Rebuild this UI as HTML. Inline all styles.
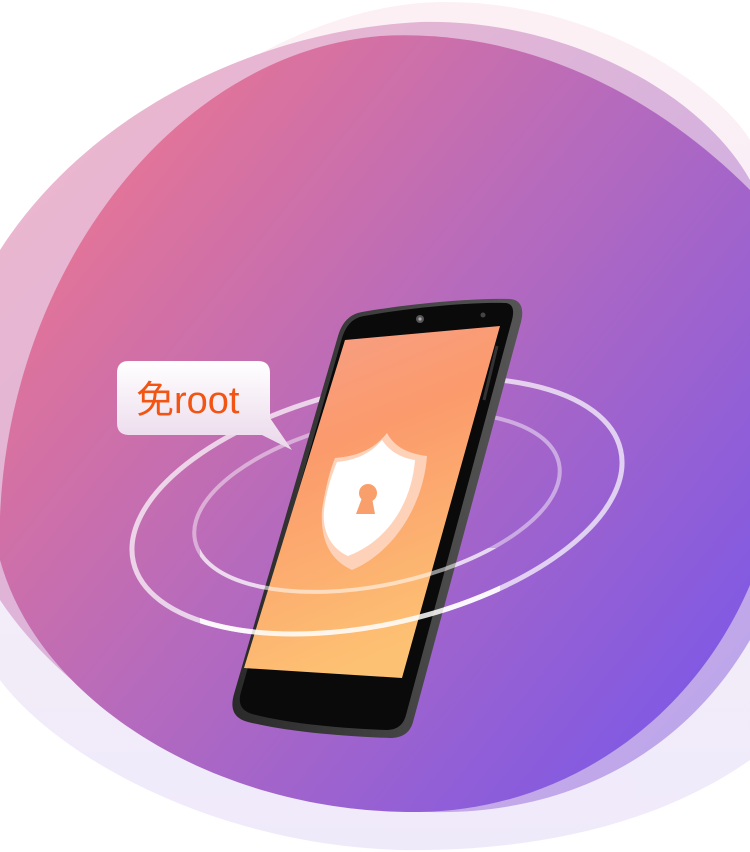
<!DOCTYPE html>
<html><head><meta charset="utf-8"><style>
html,body{margin:0;padding:0;background:#fff;width:750px;height:852px;overflow:hidden}
svg{display:block}
</style></head><body>
<svg width="750" height="852" viewBox="0 0 750 852" xmlns="http://www.w3.org/2000/svg">
<defs>
<linearGradient id="pale" x1="0" y1="0" x2="0" y2="1">
<stop offset="0" stop-color="#fcf0f4"/><stop offset="0.5" stop-color="#f6eef8"/><stop offset="1" stop-color="#efeafa"/>
</linearGradient>
<linearGradient id="mid" x1="0" y1="0" x2="1" y2="1">
<stop offset="0" stop-color="#f0b8cb"/><stop offset="0.5" stop-color="#d9b3dc"/><stop offset="1" stop-color="#b7a3ef"/>
</linearGradient>
<linearGradient id="main" x1="0.05" y1="0.15" x2="0.95" y2="0.9">
<stop offset="0" stop-color="#ec7690"/><stop offset="0.45" stop-color="#b86bbb"/><stop offset="1" stop-color="#7c58e6"/>
</linearGradient>
<linearGradient id="scr" x1="0" y1="0" x2="0.3" y2="1">
<stop offset="0" stop-color="#f6a08a"/><stop offset="0.4" stop-color="#fb9a6c"/><stop offset="1" stop-color="#fdc173"/>
</linearGradient>
<linearGradient id="bub" x1="0" y1="0" x2="0" y2="1">
<stop offset="0" stop-color="#ffffff"/><stop offset="1" stop-color="#ead7ea"/>
</linearGradient>
<linearGradient id="body" x1="0" y1="0" x2="1" y2="0">
<stop offset="0" stop-color="#2a2a2a"/><stop offset="1" stop-color="#555"/>
</linearGradient>
<clipPath id="front"><rect x="200" y="548" width="300" height="120"/></clipPath>
</defs>
<path d="M0 300 C120 120 290 5 440 2 C600 0 720 90 750 140 L750 760 C650 830 520 852 400 850 C220 845 60 760 0 680 Z" fill="url(#pale)"/>
<path d="M0 250 C90 110 260 30 420 22 C560 18 700 90 750 180 L750 640 C680 760 560 815 430 812 C250 808 80 720 0 600 Z" fill="url(#mid)"/>
<path d="M0 560 C-10 300 160 55 380 36 C520 28 650 90 750 190 L750 585 C690 725 560 810 420 812 C220 814 40 705 0 560 Z" fill="url(#main)"/>
<g id="rings" fill="none" stroke="#fff">
<ellipse cx="377" cy="506" rx="250" ry="118" transform="rotate(-13 377 506)" stroke-width="5" stroke-opacity="0.7"/>
<ellipse cx="377" cy="502" rx="186" ry="83" transform="rotate(-12 377 502)" stroke-width="4" stroke-opacity="0.45"/>
</g>
<!-- phone -->
<path d="M362 312 C420 302 480 298 510 299 C522 300 524 310 521 322 L413 722 C410 733 402 738 390 738 C330 736 280 730 248 722 C233 718 230 708 234 694 L338 336 C342 322 350 314 362 312 Z" fill="url(#body)"/>
<path d="M364 316 C420 306 478 302 506 303 C514 304 514 312 512 320 L406 715 C403 726 396 730 386 730 C330 728 282 722 252 714 C240 710 238 702 241 692 L342 338 C346 326 352 318 364 316 Z" fill="#0a0a0a"/>
<circle cx="420" cy="319" r="4" fill="#555"/><circle cx="420" cy="319" r="1.6" fill="#aaa"/>
<circle cx="483" cy="315" r="2.5" fill="#444"/>
<polygon points="345,340 500,326 402,678 244,668" fill="url(#scr)"/>
<path d="M497 346 L484 400" stroke="#333" stroke-width="3"/>
<!-- shield -->
<path d="M387 433 C395 448 410 454 427 456 C424 500 398 550 352 570 C330 560 320 540 322 510 C325 490 330 470 335 458 C360 456 375 448 387 433 Z" fill="#fdd2b8"/>
<path d="M382 440 C390 452 402 458 415 460 C412 500 390 540 348 556 C330 548 322 530 324 510 C326 492 332 474 337 462 C358 460 372 452 382 440 Z" fill="#fff"/>
<circle cx="368" cy="493" r="9" fill="#f99f6b"/>
<path d="M362 498 L356 514 L375 514 L372 498 Z" fill="#f99f6b"/>
<g clip-path="url(#front)" fill="none" stroke="#fff">
<ellipse cx="377" cy="506" rx="250" ry="118" transform="rotate(-13 377 506)" stroke-width="5" stroke-opacity="0.85"/>
<ellipse cx="377" cy="502" rx="186" ry="83" transform="rotate(-12 377 502)" stroke-width="4" stroke-opacity="0.55"/>
</g>
<!-- bubble -->
<path d="M129 361 L258 361 Q270 361 270 373 L270 418 L292 450 L262 435 L129 435 Q117 435 117 423 L117 373 Q117 361 129 361 Z" fill="url(#bub)"/>
<text x="136" y="413" font-family="'Liberation Sans','Noto Sans CJK SC',sans-serif" font-size="38" fill="#f25414">免root</text>
</svg>
</body></html>
